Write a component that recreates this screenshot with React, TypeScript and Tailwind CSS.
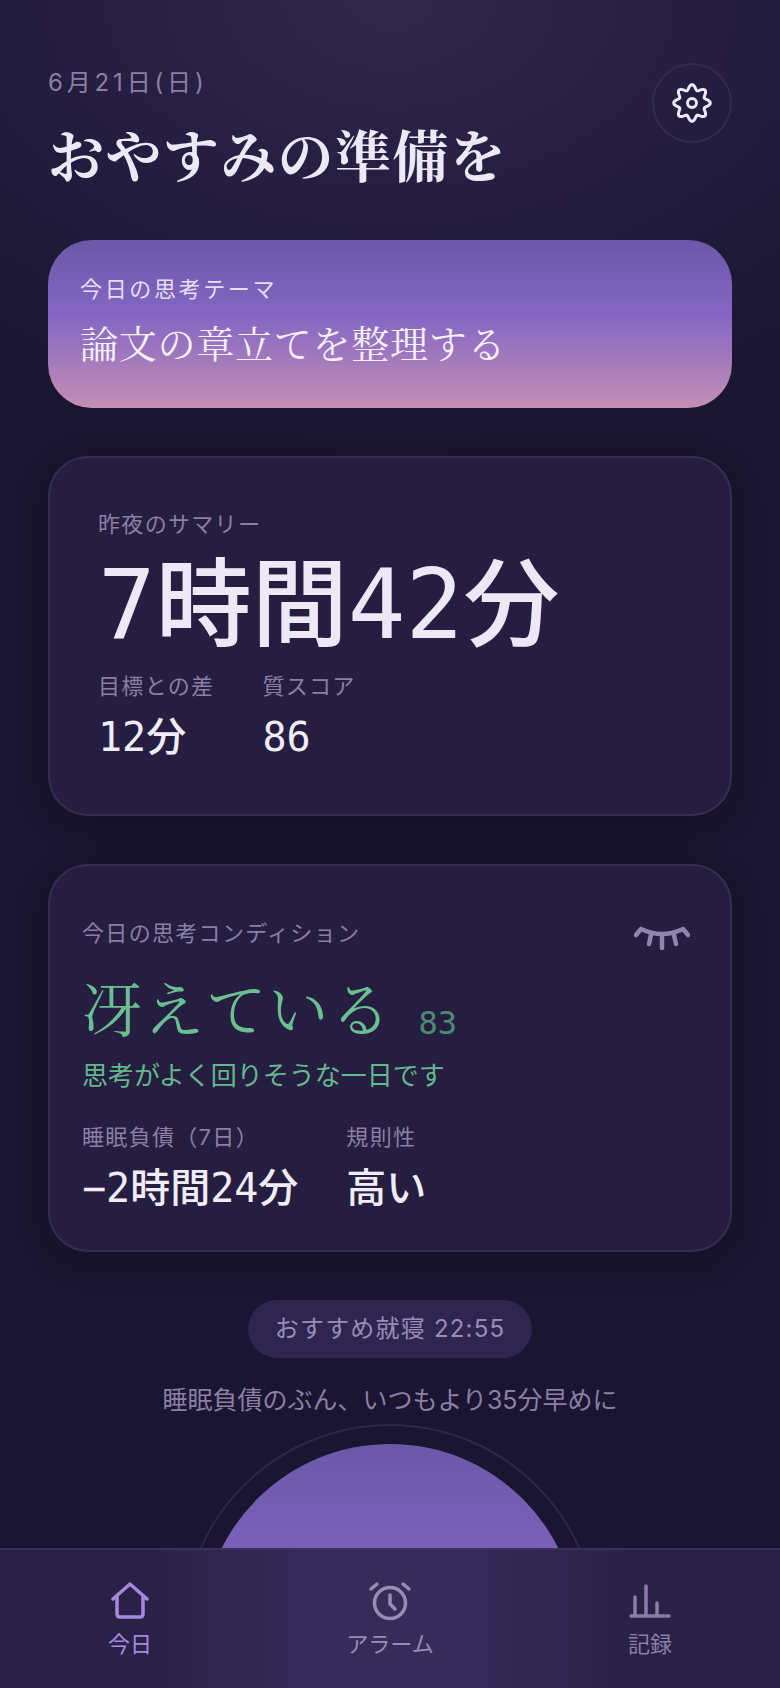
import React from "react";

const sans = "font-['Inter','Noto_Sans_CJK_JP',sans-serif]";
const mono = "font-['DejaVu_Sans_Mono','Noto_Sans_CJK_JP',monospace] font-medium";
const serif = "font-['Noto_Serif_CJK_JP','Liberation_Serif',serif]";

function gearPath() {
  const pts: string[] = [];
  for (let i = 0; i < 160; i++) {
    const t = (i / 160) * Math.PI * 2;
    const r = 15.8 + 2.5 * Math.cos(8 * t);
    pts.push(`${(22 + r * Math.sin(t)).toFixed(2)} ${(22 - r * Math.cos(t)).toFixed(2)}`);
  }
  return `M${pts.join(" L")} Z`;
}

function Gear() {
  return (
    <svg width="44" height="44" viewBox="0 0 44 44" fill="none" stroke="#ece8f6" strokeWidth="3" strokeLinecap="round" strokeLinejoin="round">
      <path d={gearPath()} />
      <circle cx="22" cy="22" r="4.5" />
    </svg>
  );
}

function EyeClosed() {
  return (
    <svg width="56" height="26" viewBox="0 0 56 26" fill="none" stroke="#9085b0" strokeWidth="4.5" strokeLinecap="round" strokeLinejoin="round">
      <path d="M2 11 L7 5 Q28 15 49 5 L54 11" />
      <path d="M17 11 L15 20" />
      <path d="M28 13 L28 24" />
      <path d="M40 11 L42 20" />
    </svg>
  );
}

function HomeIcon() {
  return (
    <svg width="40" height="38" viewBox="0 0 40 38" fill="none" stroke="#a588e0" strokeWidth="3.5" strokeLinecap="round" strokeLinejoin="round">
      <path d="M3 17 L20 2 L37 17" />
      <path d="M7 15 V32 Q7 35 10 35 H30 Q33 35 33 32 V15" />
    </svg>
  );
}

function AlarmIcon() {
  return (
    <svg width="44" height="40" viewBox="0 0 44 40" fill="none" stroke="#9a8cb8" strokeWidth="3.5" strokeLinecap="round" strokeLinejoin="round">
      <circle cx="22" cy="22" r="15.5" />
      <path d="M22 14 V23 L27 28" />
      <path d="M3 8 L9 3" />
      <path d="M35 3 L41 8" />
    </svg>
  );
}

function BarsIcon() {
  return (
    <svg width="42" height="36" viewBox="0 0 42 36" fill="none" stroke="#8a7ba8" strokeWidth="3.5" strokeLinecap="round" strokeLinejoin="round">
      <path d="M2 33 H40" />
      <path d="M6 33 V14" />
      <path d="M17 33 V3" />
      <path d="M28 33 V20" />
    </svg>
  );
}

function Stat({ label, value }: { label: string; value: string }) {
  return (
    <div className="flex flex-col">
      <span className="text-[22px] leading-[32px] tracking-[0.06em] text-[#8b7fa6]">{label}</span>
      <span className={`${mono} mt-[7px] text-[40px] leading-[56px] text-[#f0ecf9]`}>{value}</span>
    </div>
  );
}

export default function App() {
  return (
    <div className={`${sans} flex h-[1688px] w-[780px] flex-col overflow-hidden bg-[#1a1530]`}>
      <main className="flex min-h-0 flex-1 flex-col overflow-hidden bg-[radial-gradient(ellipse_700px_460px_at_50%_0%,#2f284c_0%,#241d40_50%,#1a1530_100%)] px-12 pt-[63px]">
        <header className="flex shrink-0 items-start justify-between">
          <div className="flex flex-col">
            <span className="text-[24px] leading-[40px] tracking-[0.16em] text-[#8b7fa6]">6月21日(日)</span>
            <h1 className={`${serif} mt-[14px] text-[56px] leading-[72px] font-bold tracking-[0.025em] text-[#ece8f6]`}>おやすみの準備を</h1>
          </div>
          <button className="flex h-[80px] w-[80px] items-center justify-center rounded-full border-2 border-[#332b4f]">
            <Gear />
          </button>
        </header>

        <section className="mt-[51px] flex h-[168px] shrink-0 flex-col rounded-[44px] bg-[linear-gradient(180deg,#6b58a8_0%,#8466c4_45%,#c58fb4_100%)] px-8 pt-[33px]">
          <span className="text-[22px] leading-[32px] tracking-[0.12em] text-[#e6dff3]">今日の思考テーマ</span>
          <span className={`${serif} mt-[11px] text-[38px] leading-[52px] tracking-[0.02em] text-[#f5f1fb]`}>論文の章立てを整理する</span>
        </section>

        <section className="mt-[48px] flex h-[360px] shrink-0 flex-col rounded-[40px] border-2 border-[#362e50] bg-[#261e40] px-12 pt-[50px] shadow-[0_8px_32px_rgba(0,0,0,0.2)]">
          <span className="text-[22px] leading-[32px] tracking-[0.06em] text-[#8b7fa6]">昨夜のサマリー</span>
          <span className={`${mono} mt-[5px] text-[96px] leading-[120px] text-[#ece8f6]`}>7時間42分</span>
          <div className="mt-[5px] flex gap-12">
            <Stat label="目標との差" value="12分" />
            <Stat label="質スコア" value="86" />
          </div>
        </section>

        <section className="mt-[48px] flex h-[388px] shrink-0 flex-col rounded-[40px] border-2 border-[#362e50] bg-[#261e40] px-8 pt-[51px] shadow-[0_8px_32px_rgba(0,0,0,0.2)]">
          <div className="flex items-start justify-between">
            <span className="text-[22px] leading-[32px] tracking-[0.06em] text-[#8b7fa6]">今日の思考コンディション</span>
            <span className="mr-[8px] mt-[7px] flex"><EyeClosed /></span>
          </div>
          <div className="mt-[14px] flex items-end gap-[26px]">
            <span className={`${serif} text-[60px] leading-[84px] tracking-[0.035em] text-[#6abf90]`}>冴えている</span>
            <span className={`${mono} mb-[5px] text-[32px] leading-[40px] text-[#4d8c74]`}>83</span>
          </div>
          <span className="mt-[10px] text-[26px] leading-[36px] text-[#63b98c]">思考がよく回りそうな一日です</span>
          <div className="mt-[27px] flex gap-[48px]">
            <Stat label="睡眠負債（7日）" value="−2時間24分" />
            <Stat label="規則性" value="高い" />
          </div>
        </section>

        <div className="mt-[48px] flex shrink-0 flex-col items-center">
          <span className="flex h-[58px] w-[284px] items-center justify-center rounded-full bg-[#2e2650] text-[24px] tracking-[0.05em] text-[#9a8cb8]">おすすめ就寝 22:55</span>
          <span className="mt-[24px] text-[25px] leading-[36px] text-[#8b7fa6]">睡眠負債のぶん、いつもより35分早めに</span>
          <div className="mt-[6px] flex h-[416px] w-[416px] shrink-0 items-center justify-center rounded-full border-2 border-[#2e2650]">
            <div className="h-[376px] w-[376px] rounded-full bg-[linear-gradient(180deg,#6b58a8_0%,#8466c4_45%,#c58fb4_100%)]" />
          </div>
        </div>
      </main>

      <nav className="grid h-[140px] shrink-0 grid-cols-3 border-t-2 border-[#3a3058] bg-[linear-gradient(90deg,#2a2147_0%,#2a2147_20%,#372b5a_40%,#372b5a_60%,#2a2147_80%,#2a2147_100%)] pt-[29px]">
        <div className="flex flex-col items-center">
          <span className="flex h-[44px] items-center"><HomeIcon /></span>
          <span className="mt-[5px] text-[22px] leading-[32px] text-[#a588e0]">今日</span>
        </div>
        <div className="flex flex-col items-center">
          <span className="flex h-[44px] items-center"><AlarmIcon /></span>
          <span className="mt-[5px] text-[22px] leading-[32px] text-[#9a8cb8]">アラーム</span>
        </div>
        <div className="flex flex-col items-center">
          <span className="flex h-[44px] items-center"><BarsIcon /></span>
          <span className="mt-[5px] text-[22px] leading-[32px] text-[#8b7fa6]">記録</span>
        </div>
      </nav>
    </div>
  );
}
